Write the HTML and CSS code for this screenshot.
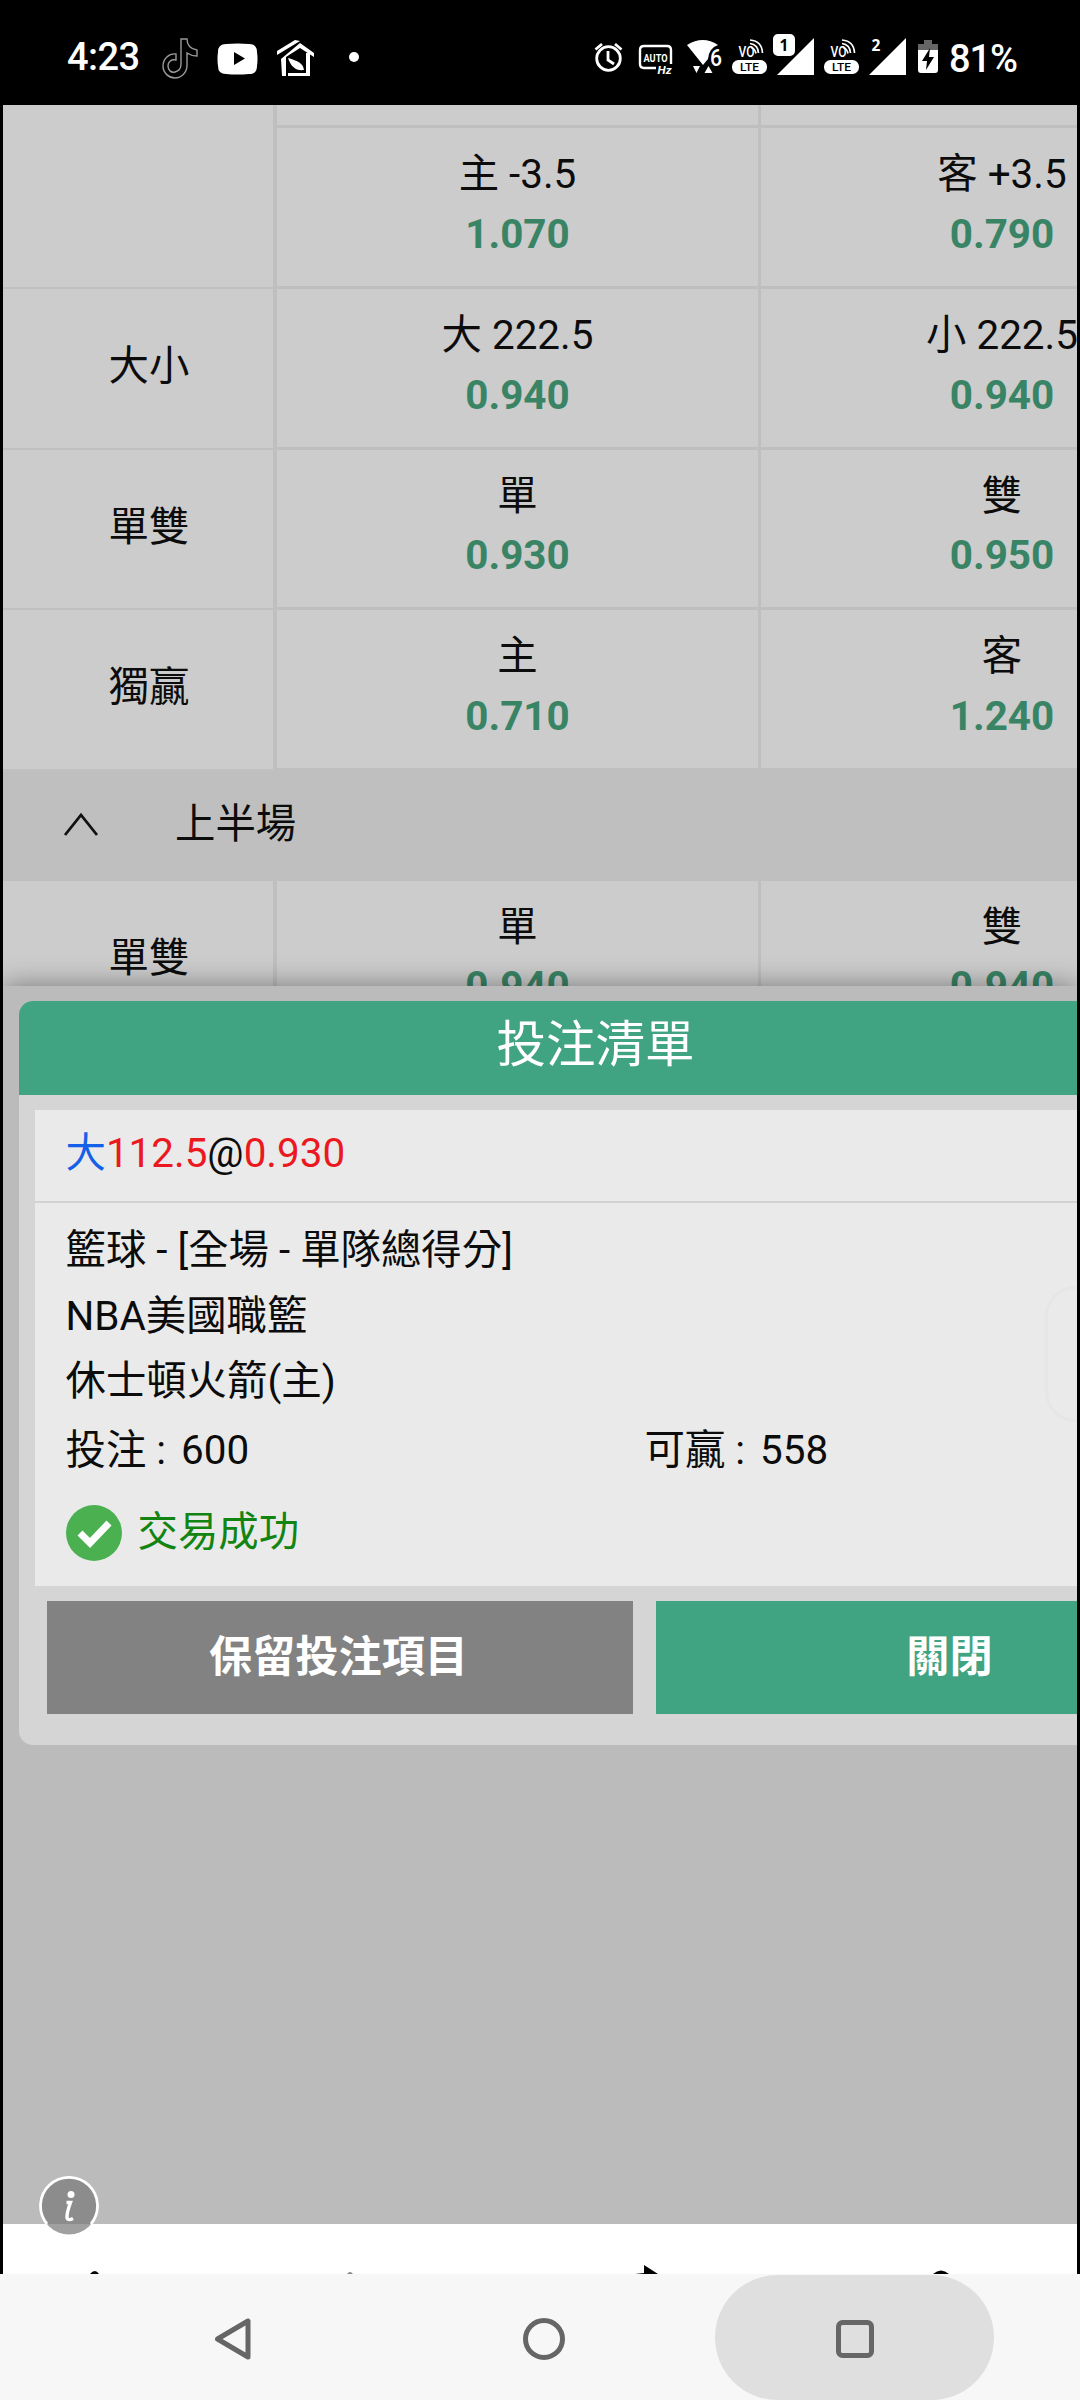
FILE: index.html
```html
<!DOCTYPE html>
<html lang="zh-Hant">
<head>
<meta charset="utf-8">
<title>投注清單</title>
<link rel="stylesheet" href="styles.css">
</head>
<body>
<div class="phone">
  <header class="status">
    <svg width="1080" height="105" viewBox="0 0 1080 105">
      <g fill="#fff">
        <text class="clock" x="67" y="70" textLength="73">4:23</text>
        <g fill="none" stroke="#999" stroke-width="1.4">
          <path d="M181 39h6c0 7 4 10 10 11v6c-4 0-7-1-10-3v12c0 8-6 13-12 13s-12-5-12-12 6-13 13-12v6c-5-1-8 2-8 6s3 7 7 6 6-3 6-8z"/>
        </g>
        <path fill-rule="evenodd" d="M226 44q12-1 23 0q8 0 8 8q1 7 0 14q0 8-8 8q-12 1-23 0q-8 0-8-8q-1-7 0-14q0-8 8-8zm8 8v13l11-6.500z"/>
        <path d="M277 51l18-11 5 1-23 14zM281 59l19-16 14 10v4l-14-9-14 9v19h-4zM310 53v23h-22v-3h18v-20zM288 58c10 3 15 5 16 12-8 1-13-3-16-12z"/>
        <circle cx="354" cy="57" r="5"/>
        <g fill="none" stroke="#fff" stroke-width="2.800"><circle cx="608.500" cy="58.500" r="11.800"/><path d="M608 51v9l6 4M595.500 49.500l6.500-5.500M621.500 49.500l-6.500-5.500"/></g>
        <path d="M656 68h-12q-4 0-4-4V50q0-4 4-4h23q4 0 4 4v14" fill="none" stroke="#fff" stroke-width="2.400"/>
        <text class="tiny" x="643.500" y="61.500" font-size="11.500" textLength="24" lengthAdjust="spacingAndGlyphs">AUTO</text>
        <text class="tiny" x="657.500" y="73.500" font-size="11.500" font-style="italic" textLength="14" lengthAdjust="spacingAndGlyphs">Hz</text>
        <path d="M687 45q16-10 31 0q-9 3-10 14l-5 6zM693 66h7l-3.500 7zM704.500 73h8l-4-7z"/>
        <text class="six" x="710" y="66" textLength="12" lengthAdjust="spacingAndGlyphs">6</text>
        <g id="volte"><text class="vo" x="738.500" y="57" textLength="16" lengthAdjust="spacingAndGlyphs">VO</text><rect x="732" y="60" width="35" height="14" rx="6.500"/><text x="740" y="71.300" class="lte" textLength="19" lengthAdjust="spacingAndGlyphs">LTE</text><path d="M751 47.500q4 1 5 6M750 43.500q8 1 8.500 9.500M750 40q12 1 12.500 13" fill="none" stroke="#fff" stroke-width="1.700"/></g>
        <path d="M814 38v37h-37z"/>
        <rect x="772" y="33" width="24" height="24" rx="6" stroke="#000" stroke-width="2"/>
        <text class="sim" x="779.500" y="50.500" fill="#000">1</text>
        <use href="#volte" x="92"/>
        <path d="M906 38v37h-37z"/>
        <text class="sim" x="871.500" y="50.500">2</text>
        <path d="M918 50h20v20q0 3-3 3h-14q-3 0-3-3z"/><path d="M918 50v-6h6v-4h8v4h6v6z" fill="#666"/><path d="M930 48l-8 13h5l-1 9 8-13h-5z" fill="#000"/>
        <text class="pct" x="949" y="71.500" textLength="69">81%</text>
      </g>
    </svg>
  </header>

  <main class="app">
    <section class="odds">
      <div class="row tail"><div class="label"></div><div class="cell"></div><div class="cell"></div></div>
      <div class="row first"><div class="label"></div><div class="cell"><span>主 -3.5</span><b>1.070</b></div><div class="cell"><span>客 +3.5</span><b>0.790</b></div></div>
      <div class="row"><div class="label">大小</div><div class="cell"><span>大 222.5</span><b>0.940</b></div><div class="cell"><span>小 222.5</span><b>0.940</b></div></div>
      <div class="row"><div class="label">單雙</div><div class="cell"><span>單</span><b>0.930</b></div><div class="cell"><span>雙</span><b>0.950</b></div></div>
      <div class="row"><div class="label">獨贏</div><div class="cell"><span>主</span><b>0.710</b></div><div class="cell"><span>客</span><b>1.240</b></div></div>
      <div class="period">
        <svg width="36" height="26" viewBox="0 0 36 26"><path d="M2 23L18 3l16 20" fill="none" stroke="#111" stroke-width="2.800"/></svg>
        <span>上半場</span>
      </div>
      <div class="row"><div class="label">單雙</div><div class="cell"><span>單</span><b>0.940</b></div><div class="cell"><span>雙</span><b>0.940</b></div></div>
    </section>

    <section class="sheet">
      <div class="slip">
        <h1 class="slip-title">投注清單</h1>
        <div class="ticket">
          <div class="pick"><span class="side">大</span><span class="red">112.5</span>@<span class="red">0.930</span></div>
          <div class="detail">
            <p>籃球 - [全場 - 單隊總得分]</p>
            <p>NBA美國職籃</p>
            <p>休士頓火箭(主)</p>
            <div class="amounts"><div>投注 : <span>600</span></div><div>可贏 : <span>558</span></div></div>
            <div class="success">
              <svg width="56" height="56" viewBox="0 0 56 56"><circle cx="28" cy="28" r="28" fill="#4bb150"/><path d="M14 28l10 10 19-20" fill="none" stroke="#fff" stroke-width="7"/></svg>
              <span>交易成功</span>
            </div>
          </div>
        </div>
        <div class="actions"><button class="keep">保留投注項目</button><button class="close">關閉</button></div>
      </div>
      <div class="edge-handle"></div>
    </section>

    <footer class="tabs">
      <svg width="1074" height="50" viewBox="3 2224 1074 50">
        <path d="M90 2274q5-6 9 0zM635 2274l9-1v-8l14 9zM933 2274q8-7 16 0z" fill="#000"/><path d="M347 2274q3-4 6 0z" fill="#888"/>
      </svg>
    </footer>
    <div class="info">
      <svg width="60" height="60" viewBox="0 0 60 60"><circle cx="30" cy="30" r="28.500" fill="#777" fill-opacity=".7"/><path d="M8 48A28.500 28.500 0 1 1 52 48" fill="none" stroke="#fff" stroke-width="2.800"/><circle cx="32" cy="18.500" r="3.500" fill="#fff"/><path d="M27.500 26.500h4q-4 11-3.500 15.500q1 3 6 .5" fill="none" stroke="#fff" stroke-width="3.400"/></svg>
    </div>
  </main>

  <nav class="nav">
    <div class="key"><svg width="40" height="46" viewBox="0 0 40 46"><path d="M35 5v36L4.500 23z" fill="none" stroke="#666" stroke-width="5" stroke-linejoin="round"/></svg></div>
    <div class="key"><svg width="44" height="44" viewBox="0 0 44 44"><circle cx="22" cy="22" r="18.500" fill="none" stroke="#666" stroke-width="5"/></svg></div>
    <div class="key pressed"><svg width="40" height="40" viewBox="0 0 40 40"><rect x="3.500" y="3.500" width="33" height="33" rx="4" fill="none" stroke="#666" stroke-width="5"/></svg></div>
  </nav>
</div>
</body>
</html>
```
FILE: styles.css
```css
* { box-sizing: border-box; }
body { margin: 0; background: #000; }
.phone {
  width: 1080px; height: 2400px; overflow: hidden;
  display: flex; flex-direction: column;
  font: 40.400px/60px Roboto, "Noto Sans CJK TC", sans-serif; color: #0c0c0c;
}
.status { height: 105px; background: #000; flex: none; }
.status svg { display: block; }
.clock, .pct { font: 500 38px Roboto, sans-serif; }
.tiny { font-family: Roboto, sans-serif; font-weight: 700; }
.six { font: 500 24px Roboto, sans-serif; }
.vo { font: 500 14px Roboto, sans-serif; }
.lte { font: 500 11.500px Roboto, sans-serif; fill: #000; }
.sim { font: 700 15.500px "Noto Sans", sans-serif; }

.app {
  position: relative; flex: none;
  width: 1074px; height: 2169px; margin: 0 3px;
  display: flex; flex-direction: column;
  background: #bbb; overflow: hidden;
}
.odds { height: 881px; flex: none; overflow: hidden; }
.row {
  width: 1240px; height: 160.500px;
  display: grid; grid-template-columns: 270px 485px 485px;
}
.tail { height: 23px; }
.first { height: 161px; }
.label {
  display: flex; align-items: center; justify-content: center;
  padding-left: 22px; padding-bottom: 2px;
  background: #ccc;
  border-bottom: 2px solid #c0c0c0;
}
.tail .label, .first + .tail .label { border-bottom: 0; }
.cell {
  display: flex; flex-direction: column; align-items: center;
  padding-top: 17px;
  background: #ccc; text-align: center;
  border-left: 3px solid #bfbfbf; border-bottom: 3px solid #bfbfbf;
}
.cell:nth-child(2) { border-left-width: 4px; }
.cell span, .cell b { display: block; height: 59.500px; line-height: 60px; white-space: nowrap; }
.cell b { color: #3a8466; }
.period {
  height: 110px; background: #bfbfbf;
  display: flex; align-items: center; gap: 76px; padding: 0 0 2px 60px;
}
.sheet {
  position: relative; height: 1238px; flex: none;
  padding: 15px 0 0 15.500px; background: #bbb;
  box-shadow: 0 0 26px rgba(0, 0, 0, .42);
}
.slip {
  width: 1240px; height: 744px;
  background: #d5d5d5; border-radius: 14px; overflow: hidden;
}
.slip-title {
  margin: 0; height: 94px; padding-right: 86px;
  font-size: 49.500px; font-weight: 400; line-height: 89px; text-align: center;
  color: #fff; background: #40a381;
}
.ticket { margin: 15px 16px 0; height: 476px; background: #eaeaea; }
.pick { height: 93px; padding: 14px 31px; border-bottom: 2px solid #d2d2d2; }
.side { color: #1560e8; }
.red { color: #ec1820; }
.detail { padding: 15px 31px 0; }
.detail p { margin: 0; height: 65.500px; line-height: 66px; }
.amounts { display: grid; grid-template-columns: 579px 1fr; line-height: 66px; padding-top: 3px; }
.amounts span { margin-left: 5px; }
.success { display: flex; align-items: center; gap: 16px; margin-top: 19px; color: #128412; }
.actions { display: grid; grid-template-columns: 586px 588px; gap: 23px; padding: 15px 0 0 28px; }
.actions button {
  height: 113px; border: 0; padding: 0; color: #fff;
  font: 700 43.200px/100px Roboto, "Noto Sans CJK TC", sans-serif;
}
.actions .keep { background: #828282; padding-right: 2px; }
.actions .close { background: #40a381; }
.edge-handle {
  position: absolute; left: 1042px; top: 300px; width: 60px; height: 136px;
  border: 3px solid #e6e6e6; border-radius: 32px;
}
.tabs { position: relative; height: 50px; background: #fff; }
.tabs svg { display: block; }
.info { position: absolute; left: 36px; top: 2071px; width: 60px; height: 60px; }
.info svg { display: block; }

.nav {
  height: 126px; background: #f7f7f7; padding-left: 93px;
  display: grid; grid-template-columns: 280px 342px 279px; justify-content: start;
}
.key { display: flex; align-items: center; justify-content: center; padding-top: 3px; }
.pressed { background: #dfdfdf; border-radius: 66px; margin-top: 1px; padding-top: 2px; }
```
